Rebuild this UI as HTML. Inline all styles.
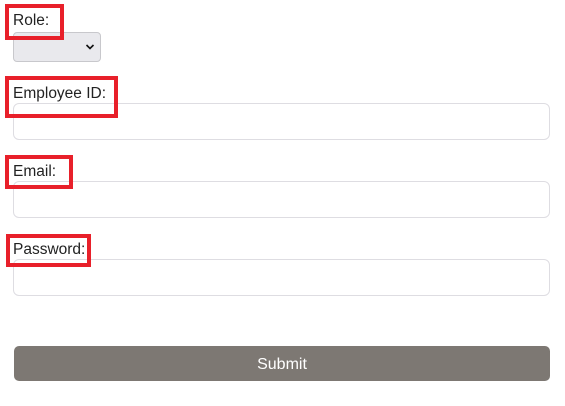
<!DOCTYPE html>
<html><head><style>
body{margin:0;width:565px;height:406px;background:#fff;font-family:"Liberation Sans",sans-serif;position:relative;overflow:hidden}
.l{position:absolute;left:13px;font-size:15.5px;color:#222}
.r{position:absolute;border:4px solid #e8202a;box-sizing:border-box}
.i{position:absolute;left:13px;width:537px;height:37px;border:1px solid #dedde2;border-radius:6px;box-sizing:border-box;background:#fff}
</style></head><body>
<div class="l" style="top:12px">Role:</div>
<div class="l" style="top:85px">Employee ID:</div>
<div class="l" style="top:163px">Email:</div>
<div class="l" style="top:241px">Password:</div>
<div style="position:absolute;left:13px;top:32px;width:88px;height:30px;background:#e9e9ed;border:1px solid #c8c8cc;border-radius:4px;box-sizing:border-box"></div>
<svg style="position:absolute;left:85px;top:43px" width="10" height="8"><path d="M1.5 2 L5 5.5 L8.5 2" stroke="#111" stroke-width="1.6" fill="none"/></svg>
<div class="i" style="top:103px"></div>
<div class="i" style="top:181px"></div>
<div class="i" style="top:259px"></div>
<div style="position:absolute;left:14px;top:346px;width:536px;height:35px;background:#7d7873;border-radius:5px;color:#fff;font-size:16px;text-align:center;line-height:38px">Submit</div>
<div class="r" style="left:5px;top:4px;width:59px;height:36px"></div>
<div class="r" style="left:5px;top:76px;width:113px;height:42px"></div>
<div class="r" style="left:5px;top:155px;width:68px;height:34px"></div>
<div class="r" style="left:6px;top:234px;width:85px;height:33px"></div>
</body></html>
